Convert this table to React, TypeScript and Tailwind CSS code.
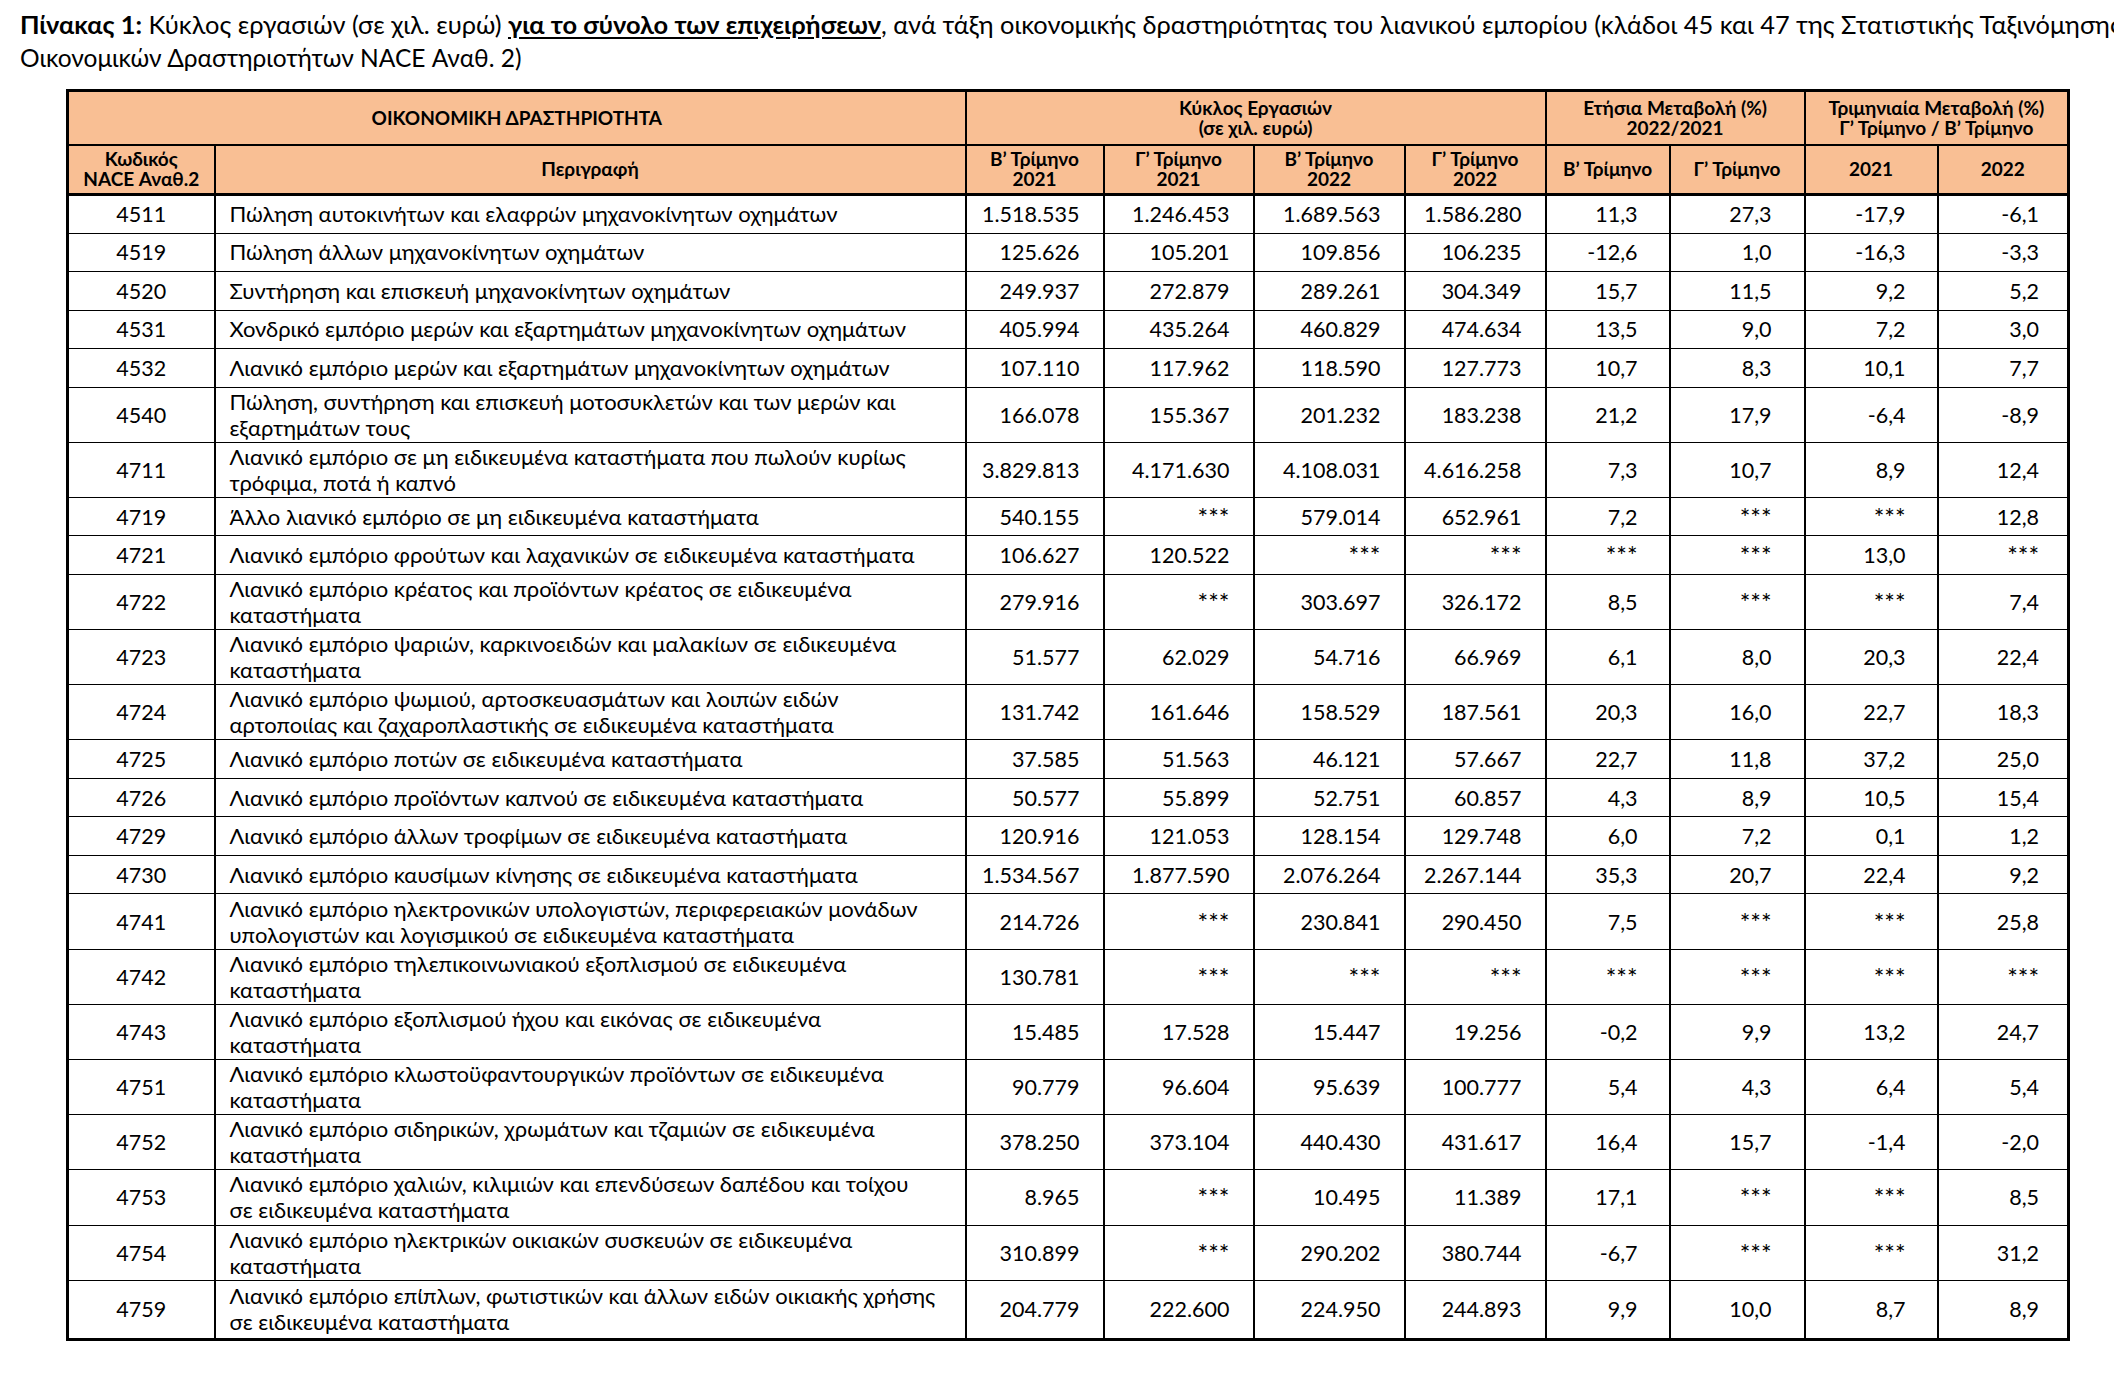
import React from 'react';

type Row = {
    code: string;
    desc: string[];
    vals: string[];
};

const rows: Row[] = [
    { code: '4511', desc: ['Πώληση αυτοκινήτων και ελαφρών μηχανοκίνητων οχημάτων'], vals: ['1.518.535', '1.246.453', '1.689.563', '1.586.280', '11,3', '27,3', '-17,9', '-6,1'] },
    { code: '4519', desc: ['Πώληση άλλων μηχανοκίνητων οχημάτων'], vals: ['125.626', '105.201', '109.856', '106.235', '-12,6', '1,0', '-16,3', '-3,3'] },
    { code: '4520', desc: ['Συντήρηση και επισκευή μηχανοκίνητων οχημάτων'], vals: ['249.937', '272.879', '289.261', '304.349', '15,7', '11,5', '9,2', '5,2'] },
    { code: '4531', desc: ['Χονδρικό εμπόριο μερών και εξαρτημάτων μηχανοκίνητων οχημάτων'], vals: ['405.994', '435.264', '460.829', '474.634', '13,5', '9,0', '7,2', '3,0'] },
    { code: '4532', desc: ['Λιανικό εμπόριο μερών και εξαρτημάτων μηχανοκίνητων οχημάτων'], vals: ['107.110', '117.962', '118.590', '127.773', '10,7', '8,3', '10,1', '7,7'] },
    { code: '4540', desc: ['Πώληση, συντήρηση και επισκευή μοτοσυκλετών και των μερών και', 'εξαρτημάτων τους'], vals: ['166.078', '155.367', '201.232', '183.238', '21,2', '17,9', '-6,4', '-8,9'] },
    { code: '4711', desc: ['Λιανικό εμπόριο σε μη ειδικευμένα καταστήματα που πωλούν κυρίως', 'τρόφιμα, ποτά ή καπνό'], vals: ['3.829.813', '4.171.630', '4.108.031', '4.616.258', '7,3', '10,7', '8,9', '12,4'] },
    { code: '4719', desc: ['Άλλο λιανικό εμπόριο σε μη ειδικευμένα καταστήματα'], vals: ['540.155', '***', '579.014', '652.961', '7,2', '***', '***', '12,8'] },
    { code: '4721', desc: ['Λιανικό εμπόριο φρούτων και λαχανικών σε ειδικευμένα καταστήματα'], vals: ['106.627', '120.522', '***', '***', '***', '***', '13,0', '***'] },
    { code: '4722', desc: ['Λιανικό εμπόριο κρέατος και προϊόντων κρέατος σε ειδικευμένα', 'καταστήματα'], vals: ['279.916', '***', '303.697', '326.172', '8,5', '***', '***', '7,4'] },
    { code: '4723', desc: ['Λιανικό εμπόριο ψαριών, καρκινοειδών και μαλακίων σε ειδικευμένα', 'καταστήματα'], vals: ['51.577', '62.029', '54.716', '66.969', '6,1', '8,0', '20,3', '22,4'] },
    { code: '4724', desc: ['Λιανικό εμπόριο ψωμιού, αρτοσκευασμάτων και λοιπών ειδών', 'αρτοποιίας και ζαχαροπλαστικής σε ειδικευμένα καταστήματα'], vals: ['131.742', '161.646', '158.529', '187.561', '20,3', '16,0', '22,7', '18,3'] },
    { code: '4725', desc: ['Λιανικό εμπόριο ποτών σε ειδικευμένα καταστήματα'], vals: ['37.585', '51.563', '46.121', '57.667', '22,7', '11,8', '37,2', '25,0'] },
    { code: '4726', desc: ['Λιανικό εμπόριο προϊόντων καπνού σε ειδικευμένα καταστήματα'], vals: ['50.577', '55.899', '52.751', '60.857', '4,3', '8,9', '10,5', '15,4'] },
    { code: '4729', desc: ['Λιανικό εμπόριο άλλων τροφίμων σε ειδικευμένα καταστήματα'], vals: ['120.916', '121.053', '128.154', '129.748', '6,0', '7,2', '0,1', '1,2'] },
    { code: '4730', desc: ['Λιανικό εμπόριο καυσίμων κίνησης σε ειδικευμένα καταστήματα'], vals: ['1.534.567', '1.877.590', '2.076.264', '2.267.144', '35,3', '20,7', '22,4', '9,2'] },
    { code: '4741', desc: ['Λιανικό εμπόριο ηλεκτρονικών υπολογιστών, περιφερειακών μονάδων', 'υπολογιστών και λογισμικού σε ειδικευμένα καταστήματα'], vals: ['214.726', '***', '230.841', '290.450', '7,5', '***', '***', '25,8'] },
    { code: '4742', desc: ['Λιανικό εμπόριο τηλεπικοινωνιακού εξοπλισμού σε ειδικευμένα', 'καταστήματα'], vals: ['130.781', '***', '***', '***', '***', '***', '***', '***'] },
    { code: '4743', desc: ['Λιανικό εμπόριο εξοπλισμού ήχου και εικόνας σε ειδικευμένα', 'καταστήματα'], vals: ['15.485', '17.528', '15.447', '19.256', '-0,2', '9,9', '13,2', '24,7'] },
    { code: '4751', desc: ['Λιανικό εμπόριο κλωστοϋφαντουργικών προϊόντων σε ειδικευμένα', 'καταστήματα'], vals: ['90.779', '96.604', '95.639', '100.777', '5,4', '4,3', '6,4', '5,4'] },
    { code: '4752', desc: ['Λιανικό εμπόριο σιδηρικών, χρωμάτων και τζαμιών σε ειδικευμένα', 'καταστήματα'], vals: ['378.250', '373.104', '440.430', '431.617', '16,4', '15,7', '-1,4', '-2,0'] },
    { code: '4753', desc: ['Λιανικό εμπόριο χαλιών, κιλιμιών και επενδύσεων δαπέδου και τοίχου', 'σε ειδικευμένα καταστήματα'], vals: ['8.965', '***', '10.495', '11.389', '17,1', '***', '***', '8,5'] },
    { code: '4754', desc: ['Λιανικό εμπόριο ηλεκτρικών οικιακών συσκευών σε ειδικευμένα', 'καταστήματα'], vals: ['310.899', '***', '290.202', '380.744', '-6,7', '***', '***', '31,2'] },
    { code: '4759', desc: ['Λιανικό εμπόριο επίπλων, φωτιστικών και άλλων ειδών οικιακής χρήσης', 'σε ειδικευμένα καταστήματα'], vals: ['204.779', '222.600', '224.950', '244.893', '9,9', '10,0', '8,7', '8,9'] },
];

// right padding per value column (numbers vs percentages)
const valPad = ['pr-[23px]', 'pr-[23px]', 'pr-[23px]', 'pr-[23px]', 'pr-[31px]', 'pr-[32px]', 'pr-[31px]', 'pr-[28px]'];

const th = 'bg-[#f9bf94] border-2 border-black font-bold text-[19px] leading-[20px] text-center align-middle';
const td = 'border [border-style:solid_solid_dotted_solid] border-black [border-bottom-color:#7f7f7f] border-l-2 border-r-2 align-middle';

export default function App() {
    return (
        <div className="w-[2114px] min-h-[1392px] bg-white text-black overflow-hidden [font-family:Lato,'Noto_Sans',sans-serif]">
            {/* Title */}
            <div className="pl-[20px] pt-[7px] leading-[34px] whitespace-nowrap">
                <div className="text-[25.4px]">
                    <span className="font-bold">Πίνακας 1:</span> Κύκλος εργασιών (σε χιλ. ευρώ){' '}
                    <span className="font-bold underline underline-offset-[3px]">για το σύνολο των επιχειρήσεων</span>, ανά τάξη οικονομικής
                    δραστηριότητας του λιανικού εμπορίου (κλάδοι 45 και 47 της Στατιστικής Ταξινόμησης
                </div>
                <div className="text-[24.5px]">Οικονομικών Δραστηριοτήτων NACE Αναθ. 2)</div>
            </div>

            <table className="ml-[66px] mt-[14px] table-fixed border-collapse border-[3px] border-black w-[2002px]">
                <colgroup>
                    <col className="w-[147px]" />
                    <col className="w-[751px]" />
                    <col className="w-[138px]" />
                    <col className="w-[150px]" />
                    <col className="w-[151px]" />
                    <col className="w-[141px]" />
                    <col className="w-[124px]" />
                    <col className="w-[135px]" />
                    <col className="w-[133px]" />
                    <col className="w-[131px]" />
                </colgroup>
                <thead>
                    <tr className="h-[54px]">
                        <th colSpan={2} className={th}>ΟΙΚΟΝΟΜΙΚΗ ΔΡΑΣΤΗΡΙΟΤΗΤΑ</th>
                        <th colSpan={4} className={th}>Κύκλος Εργασιών<br />(σε χιλ. ευρώ)</th>
                        <th colSpan={2} className={th}>Ετήσια Μεταβολή (%)<br />2022/2021</th>
                        <th colSpan={2} className={th}>Τριμηνιαία Μεταβολή (%)<br />Γ’ Τρίμηνο / Β’ Τρίμηνο</th>
                    </tr>
                    <tr className="h-[50px]">
                        <th className={`${th} border-b-[3px]`}>Κωδικός<br />NACE Αναθ.2</th>
                        <th className={`${th} border-b-[3px]`}>Περιγραφή</th>
                        <th className={`${th} border-b-[3px]`}>Β’ Τρίμηνο<br />2021</th>
                        <th className={`${th} border-b-[3px]`}>Γ’ Τρίμηνο<br />2021</th>
                        <th className={`${th} border-b-[3px]`}>Β’ Τρίμηνο<br />2022</th>
                        <th className={`${th} border-b-[3px]`}>Γ’ Τρίμηνο<br />2022</th>
                        <th className={`${th} border-b-[3px]`}>Β’ Τρίμηνο</th>
                        <th className={`${th} border-b-[3px]`}>Γ’ Τρίμηνο</th>
                        <th className={`${th} border-b-[3px]`}>2021</th>
                        <th className={`${th} border-b-[3px]`}>2022</th>
                    </tr>
                </thead>
                <tbody>
                    {rows.map((r, i) => {
                        const h = r.desc.length > 1 ? (i === rows.length - 1 ? 'h-[59px]' : 'h-[55.2px]') : 'h-[38.5px]';
                        return (
                            <tr key={r.code} className={h}>
                                <td className={`${td} text-center text-[21.5px] leading-[26px]`}>{r.code}</td>
                                <td className={`${td} pl-[14px] text-[22px] leading-[26px] whitespace-nowrap`}>
                                    {r.desc.map((l, j) => (
                                        <div key={j}>{l}</div>
                                    ))}
                                </td>
                                {r.vals.map((v, j) => (
                                    <td key={j} className={`${td} text-right leading-[26px] ${v === '***' ? 'text-[25px]' : 'text-[21.5px]'} ${valPad[j]}`}>{v}</td>
                                ))}
                            </tr>
                        );
                    })}
                </tbody>
            </table>
        </div>
    );
}
